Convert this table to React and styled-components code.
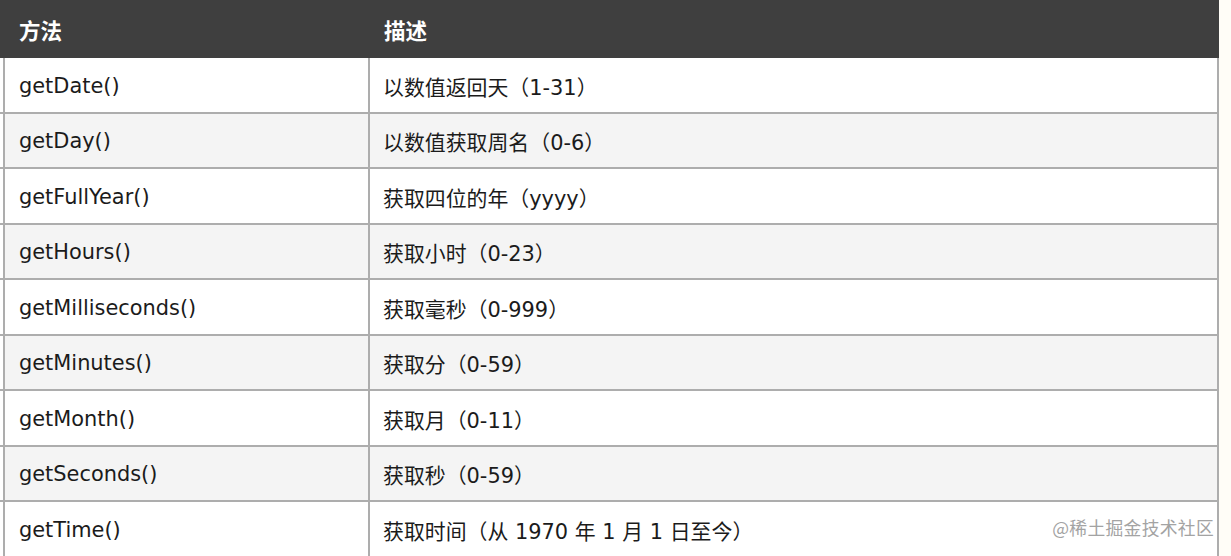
import React from 'react';
import styled, { createGlobalStyle } from 'styled-components';

const rows = [
    ['getDate()', '以数值返回天（1-31）'],
    ['getDay()', '以数值获取周名（0-6）'],
    ['getFullYear()', '获取四位的年（yyyy）'],
    ['getHours()', '获取小时（0-23）'],
    ['getMilliseconds()', '获取毫秒（0-999）'],
    ['getMinutes()', '获取分（0-59）'],
    ['getMonth()', '获取月（0-11）'],
    ['getSeconds()', '获取秒（0-59）'],
    ['getTime()', '获取时间（从 1970 年 1 月 1 日至今）'],
];

const GlobalStyle = createGlobalStyle`
    html, body {
        margin: 0;
        padding: 0;
        background: #fffdf7;
    }
    body {
        font-family: "DejaVu Sans", "Noto Sans CJK SC", sans-serif;
    }
`;

const Page = styled.div`
    position: relative;
    width: 1231px;
    height: 556px;
    overflow: hidden;
`;

const Table = styled.div`
    width: 1219px;
    display: flex;
    flex-direction: column;
`;

const Head = styled.div`
    display: grid;
    grid-template-columns: 368px 1fr;
    height: 58px;
    background: #3f3f3f;
    color: #fff;
    font-family: "Noto Sans CJK SC", sans-serif;
    font-weight: 700;
    font-size: 21.5px;
`;

const HeadCell = styled.div`
    display: flex;
    align-items: center;
    padding-left: ${p => p.$pad}px;
    padding-top: 1px;
`;

const Row = styled.div`
    display: grid;
    grid-template-columns: 365px 1fr;
    height: 55.5px;
    box-sizing: border-box;
    border-bottom: 2px solid #adadad;
    padding-left: 3px;
    background: #fff;
`;

const Cell = styled.div`
    display: flex;
    align-items: center;
    box-sizing: border-box;
    padding-left: ${p => p.$pad}px;
    padding-top: 2px;
    border-left: 2px solid #adadad;
    background: ${p => (p.$alt ? '#f4f4f4' : '#fff')};
    color: #1b1b1b;
    font-size: 20.9px;
    white-space: nowrap;
    &:last-child {
        border-right: 2px solid #adadad;
    }
`;

const Mark = styled.div`
    position: absolute;
    right: 17px;
    bottom: 16px;
    font-family: "Noto Sans CJK SC", sans-serif;
    font-size: 17.8px;
    color: #a3a3a3;
    letter-spacing: 0.3px;
`;

const App = () => (
    <Page>
        <GlobalStyle />
        <Table>
            <Head>
                <HeadCell $pad={19}>方法</HeadCell>
                <HeadCell $pad={16}>描述</HeadCell>
            </Head>
            {rows.map(([method, desc], i) => (
                <Row key={method}>
                    <Cell $pad={14} $alt={i % 2 === 1}>{method}</Cell>
                    <Cell $pad={13} $alt={i % 2 === 1}>{desc}</Cell>
                </Row>
            ))}
        </Table>
        <Mark>@稀土掘金技术社区</Mark>
    </Page>
);

export default App;
